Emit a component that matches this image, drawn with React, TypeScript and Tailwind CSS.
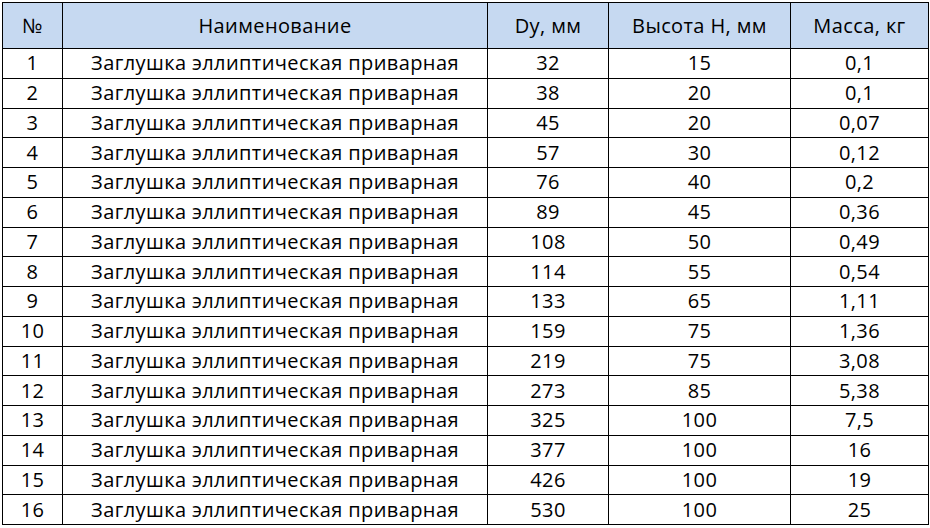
const rows: [number, number, number, string][] = [
  [1, 32, 15, '0,1'],
  [2, 38, 20, '0,1'],
  [3, 45, 20, '0,07'],
  [4, 57, 30, '0,12'],
  [5, 76, 40, '0,2'],
  [6, 89, 45, '0,36'],
  [7, 108, 50, '0,49'],
  [8, 114, 55, '0,54'],
  [9, 133, 65, '1,11'],
  [10, 159, 75, '1,36'],
  [11, 219, 75, '3,08'],
  [12, 273, 85, '5,38'],
  [13, 325, 100, '7,5'],
  [14, 377, 100, '16'],
  [15, 426, 100, '19'],
  [16, 530, 100, '25'],
];

const cell = 'border border-black text-center align-middle p-0';

export default function App() {
  return (
    <div className="w-[930px] h-[528px] bg-white pt-[2px] pl-[2px] overflow-hidden">
      <table
        className="table-fixed border-collapse w-[926px] text-[20px] tracking-[0.4px] leading-none text-black"
        style={{ fontFamily: '"Open Sans", "Liberation Sans", sans-serif' }}
      >
        <colgroup>
          <col className="w-[60px]" />
          <col className="w-[425px]" />
          <col className="w-[121px]" />
          <col className="w-[182px]" />
          <col className="w-[138px]" />
        </colgroup>
        <thead>
          <tr className="h-[46px] bg-[#c6d9f1]">
            <th className={`${cell} font-normal`}>№</th>
            <th className={`${cell} font-normal`}>Наименование</th>
            <th className={`${cell} font-normal`}>Dy, мм</th>
            <th className={`${cell} font-normal`}>Высота Н, мм</th>
            <th className={`${cell} font-normal`}>Масса, кг</th>
          </tr>
        </thead>
        <tbody>
          {rows.map(([n, dy, h, m]) => (
            <tr key={n} className="h-[29.75px]">
              <td className={cell}>{n}</td>
              <td className={cell}>Заглушка эллиптическая приварная</td>
              <td className={cell}>{dy}</td>
              <td className={cell}>{h}</td>
              <td className={cell}>{m}</td>
            </tr>
          ))}
        </tbody>
      </table>
    </div>
  );
}
